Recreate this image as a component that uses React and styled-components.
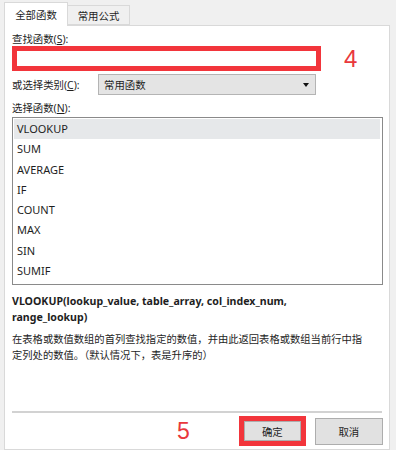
import React from "react";
import styled, { createGlobalStyle } from "styled-components";

const GlobalStyle = createGlobalStyle`
  html, body {
    margin: 0;
    padding: 0;
    background: #f0f0f0;
  }
  body {
    font-family: "Noto Sans", "Noto Sans CJK SC", sans-serif;
    color: #1e1e1e;
  }
`;

const Root = styled.div`
  width: 396px;
  height: 450px;
  overflow: hidden;
  display: flex;
  flex-direction: column;
  background: #f0f0f0;
`;

const TabBar = styled.div`
  display: flex;
  align-items: flex-end;
  height: 25px;
  padding-left: 4px;
`;

const Tab = styled.div`
  box-sizing: border-box;
  display: flex;
  align-items: center;
  justify-content: center;
  width: ${(p) => (p.active ? "64px" : "62px")};
  height: ${(p) => (p.active ? "24px" : "20px")};
  margin-bottom: ${(p) => (p.active ? "-1px" : "0")};
  background: ${(p) => (p.active ? "#fff" : "#f0f0f0")};
  border: 1px solid #d9d9d9;
  border-bottom: ${(p) => (p.active ? "none" : "1px solid #d9d9d9")};
  border-left: ${(p) => (p.active ? "1px solid #d9d9d9" : "none")};
  font-size: 10.4px;
  z-index: ${(p) => (p.active ? 1 : 0)};
`;

const Panel = styled.div`
  box-sizing: border-box;
  flex: 1;
  width: 386px;
  margin-left: 4px;
  background: #fff;
  border: 1px solid #d9d9d9;
  padding: 6px 0 0 7px;
  display: flex;
  flex-direction: column;
`;

const Label = styled.div`
  font-size: 10.4px;
  line-height: 14px;
  height: 14px;
  u {
    text-decoration: underline;
  }
`;

const SearchRow = styled.div`
  display: flex;
  align-items: center;
  margin-top: 0px;
`;

const RedBox = styled.div`
  box-sizing: border-box;
  width: ${(p) => p.w}px;
  height: ${(p) => p.h}px;
  border: 5px solid #f2353b;
  background: #fff;
  display: flex;
  align-items: center;
  justify-content: center;
  padding: 0;
`;

const StepNum = styled.div`
  font-family: "Liberation Sans", Arial, sans-serif;
  font-size: ${(p) => p.size}px;
  color: #e9383c;
  line-height: 1;
  margin-left: ${(p) => p.gap}px;
`;

const CategoryRow = styled.div`
  display: flex;
  align-items: center;
  margin-top: 3px;
  height: 21px;
`;

const CategoryLabel = styled(Label)`
  width: 86px;
`;

const Select = styled.div`
  box-sizing: border-box;
  width: 218px;
  height: 21px;
  background: #e4e4e4;
  border: 1px solid #b4b4b4;
  display: flex;
  align-items: center;
  justify-content: space-between;
  padding: 0 6px 0 5px;
  font-size: 10.4px;
`;

const Arrow = styled.div`
  width: 0;
  height: 0;
  border-left: 3.5px solid transparent;
  border-right: 3.5px solid transparent;
  border-top: 4px solid #111;
`;

const ListLabel = styled(Label)`
  margin-top: 6px;
`;

const List = styled.div`
  box-sizing: border-box;
  width: 371px;
  height: 168px;
  margin-top: 2px;
  border: 1px solid #8a8a8a;
  padding: 1px 2px 0 1px;
  display: flex;
  flex-direction: column;
`;

const Item = styled.div`
  height: 20.3px;
  line-height: 20.3px;
  padding-left: 3px;
  font-size: 11px;
  background: ${(p) => (p.selected ? "#e6e8ea" : "transparent")};
`;

const Signature = styled.div`
  margin-top: 8px;
  font-size: 10.6px;
  font-weight: 700;
  line-height: 16px;
`;

const Desc = styled.div`
  margin-top: 6px;
  font-size: 10.3px;
  line-height: 16px;
`;

const Spacer = styled.div`
  flex: 1;
`;

const Separator = styled.div`
  width: 370px;
  height: 2px;
  background: #d2d2d2;
`;

const ButtonRow = styled.div`
  display: flex;
  align-items: center;
  height: 36px;
  padding-left: 165px;
`;

const Button = styled.div`
  box-sizing: border-box;
  width: ${(p) => p.w}px;
  height: ${(p) => p.h}px;
  background: #e1e1e1;
  border: 1px solid #adadad;
  display: flex;
  align-items: center;
  justify-content: center;
  font-size: 10.4px;
`;

const CancelWrap = styled.div`
  margin-left: 9px;
`;

const functions = ["VLOOKUP", "SUM", "AVERAGE", "IF", "COUNT", "MAX", "SIN", "SUMIF"];

export default function App() {
  return (
    <Root>
      <GlobalStyle />
      <TabBar>
        <Tab active>全部函数</Tab>
        <Tab>常用公式</Tab>
      </TabBar>
      <Panel>
        <Label>
          查找函数(<u>S</u>):
        </Label>
        <SearchRow>
          <RedBox w={309} h={25} />
          <StepNum size={24} gap={23}>
            4
          </StepNum>
        </SearchRow>
        <CategoryRow>
          <CategoryLabel>
            或选择类别(<u>C</u>):
          </CategoryLabel>
          <Select>
            <span>常用函数</span>
            <Arrow />
          </Select>
        </CategoryRow>
        <ListLabel>
          选择函数(<u>N</u>):
        </ListLabel>
        <List>
          {functions.map((f, i) => (
            <Item key={f} selected={i === 0}>
              {f}
            </Item>
          ))}
        </List>
        <Signature>
          VLOOKUP(lookup_value, table_array, col_index_num,
          <br />
          range_lookup)
        </Signature>
        <Desc>
          在表格或数值数组的首列查找指定的数值，并由此返回表格或数组当前行中指
          <br />
          定列处的数值。（默认情况下，表是升序的）
        </Desc>
        <Spacer />
        <Separator />
        <ButtonRow>
          <StepNum size={23} gap={0}>
            5
          </StepNum>
          <RedBox w={67} h={30} style={{ marginLeft: 49 }}>
            <Button w={57} h={20}>
              确定
            </Button>
          </RedBox>
          <CancelWrap>
            <Button w={68} h={27}>
              取消
            </Button>
          </CancelWrap>
        </ButtonRow>
      </Panel>
    </Root>
  );
}
